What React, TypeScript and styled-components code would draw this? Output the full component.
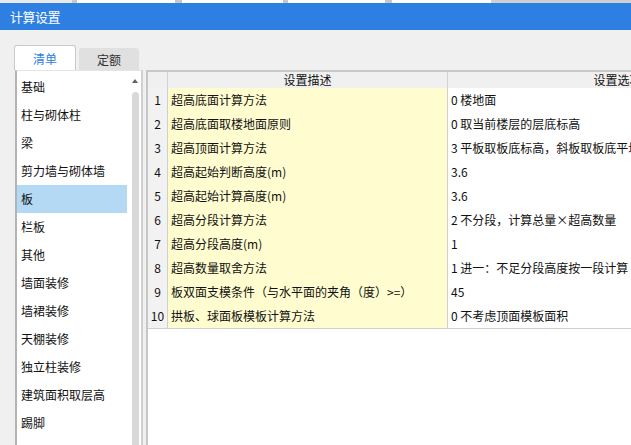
import React from "react";
import styled, { createGlobalStyle } from "styled-components";

const GlobalStyle = createGlobalStyle`
  html, body {
    margin: 0;
    padding: 0;
    width: 631px;
    height: 445px;
    overflow: hidden;
    background: #f0f0f0;
  }
  * {
    box-sizing: border-box;
  }
`;

const Window = styled.div`
  display: flex;
  flex-direction: column;
  width: 631px;
  height: 445px;
  font-family: "Noto Sans CJK SC", "Noto Sans", sans-serif;
  font-size: 12px;
  color: #111;
`;

const Backdrop = styled.div`
  display: flex;
  height: 3px;
  flex-shrink: 0;
`;

const BackdropPiece = styled.div<{ $w: number; $tone: string }>`
  width: ${(p) => p.$w}px;
  background: ${(p) => p.$tone};
  flex-shrink: 0;
`;

const TitleBar = styled.div`
  height: 27px;
  flex-shrink: 0;
  padding-left: 10px;
  background: #2d80e1;
  color: #fff;
  font-size: 13px;
  line-height: 27px;
  letter-spacing: -0.5px;
`;

const Body = styled.div`
  flex: 1;
  display: flex;
  flex-direction: column;
  min-height: 0;
  padding: 15px 0 0 14px;
  border-left: 3px solid #e2e5ea;
  margin-left: -3px;
`;

const TabRow = styled.div`
  display: flex;
  align-items: flex-end;
  gap: 3px;
  height: 25px;
  flex-shrink: 0;
`;

const Tab = styled.div<{ $active?: boolean }>`
  width: ${(p) => (p.$active ? 62 : 60)}px;
  height: ${(p) => (p.$active ? 25 : 22)}px;
  display: flex;
  align-items: center;
  justify-content: center;
  border: 1px solid ${(p) => (p.$active ? "#c9c9c9" : "#e0e0e0")};
  border-bottom: none;
  border-radius: 3px 3px 0 0;
  background: ${(p) => (p.$active ? "#fff" : "#e0e0e0")};
  color: ${(p) => (p.$active ? "#2d80e1" : "#333")};
  font-size: 12px;
  padding-top: ${(p) => (p.$active ? 1 : 0)}px;
`;

const Content = styled.div`
  flex: 1;
  display: flex;
  min-height: 0;
  gap: 3px;
  padding-left: 1px;
`;

const CategoryPanel = styled.div`
  width: 128px;
  flex-shrink: 0;
  display: flex;
  background: #fff;
  border-left: 2px solid #b4b4b4;
  border-right: 2px solid #d0d0d0;
  border-top: 1px solid #e4e4e4;
  overflow: hidden;
`;

const CategoryList = styled.div`
  width: 110px;
  flex-shrink: 0;
  display: flex;
  flex-direction: column;
  padding-top: 2px;
`;

const CategoryItem = styled.div<{ $selected?: boolean }>`
  height: 28px;
  flex-shrink: 0;
  line-height: 28px;
  padding-left: 4px;
  white-space: nowrap;
  background: ${(p) => (p.$selected ? "#b3d9f5" : "transparent")};
  color: #111;
`;

const ScrollBar = styled.div`
  width: 8px;
  margin-left: 4px;
  display: flex;
  flex-direction: column;
  align-items: center;
`;

const ScrollArrow = styled.div`
  margin-top: 8px;
  width: 0;
  height: 0;
  border-left: 3.5px solid transparent;
  border-right: 3.5px solid transparent;
  border-bottom: 4px solid #606060;
`;

const ScrollThumb = styled.div`
  margin-top: 9px;
  width: 7px;
  flex: 1;
  background: #d9d9d9;
  border-radius: 4px 4px 0 0;
`;

const GridPanel = styled.div`
  flex: 1;
  min-width: 0;
  background: #fff;
  border-left: 2px solid #c6c6c6;
  border-top: 2px solid #c8c8c8;
  overflow: hidden;
`;

const Grid = styled.div`
  display: grid;
  grid-template-columns: 20px 280px 340px;
  width: 643px;
`;

const HeadCell = styled.div`
  height: 16px;
  line-height: 15px;
  background: #f0f0f0;
  border-right: 1px solid #d2d2d2;
  border-bottom: 1px solid #c8c8c8;
  text-align: center;
  box-sizing: content-box;
  white-space: nowrap;
`;

const NumCell = styled.div`
  height: 23px;
  line-height: 22px;
  background: #f2f2f2;
  border-right: 1px solid #d0d0d0;
  border-bottom: 1px solid #d0d0d0;
  text-align: center;
  box-sizing: content-box;
  margin-top: -1px;
  padding-top: 1px;
`;

const DataCell = styled.div<{ $desc?: boolean }>`
  height: 23px;
  line-height: 22px;
  padding-left: 3px;
  background: ${(p) => (p.$desc ? "#fffdd0" : "#fff")};
  border-right: 1px solid #d0d0d0;
  border-bottom: 1px solid #d0d0d0;
  white-space: nowrap;
  overflow: hidden;
  box-sizing: content-box;
  margin-top: -1px;
  padding-top: 1px;
`;

const backdrop = [
  { w: 72, tone: "#e9e9e9" },
  { w: 5, tone: "#c8c8c8" },
  { w: 98, tone: "#ffffff" },
  { w: 7, tone: "#c8c8c8" },
  { w: 101, tone: "#ffffff" },
  { w: 5, tone: "#c8c8c8" },
  { w: 97, tone: "#ffffff" },
  { w: 7, tone: "#c8c8c8" },
  { w: 99, tone: "#ffffff" },
  { w: 140, tone: "#d0d0d0" },
];

const categories = [
  "基础",
  "柱与砌体柱",
  "梁",
  "剪力墙与砌体墙",
  "板",
  "栏板",
  "其他",
  "墙面装修",
  "墙裙装修",
  "天棚装修",
  "独立柱装修",
  "建筑面积取层高",
  "踢脚",
];

const settings = [
  ["超高底面计算方法", "0 楼地面"],
  ["超高底面取楼地面原则", "0 取当前楼层的层底标高"],
  ["超高顶面计算方法", "3 平板取板底标高，斜板取板底平均标高"],
  ["超高起始判断高度(m)", "3.6"],
  ["超高起始计算高度(m)", "3.6"],
  ["超高分段计算方法", "2 不分段，计算总量×超高数量"],
  ["超高分段高度(m)", "1"],
  ["超高数量取舍方法", "1 进一：不足分段高度按一段计算"],
  ["板双面支模条件（与水平面的夹角（度）>=）", "45"],
  ["拱板、球面板模板计算方法", "0 不考虑顶面模板面积"],
];

export default function App() {
  return (
    <>
      <GlobalStyle />
      <Window>
        <Backdrop>
          {backdrop.map((b, i) => (
            <BackdropPiece key={i} $w={b.w} $tone={b.tone} />
          ))}
        </Backdrop>
        <TitleBar>计算设置</TitleBar>
        <Body>
          <TabRow>
            <Tab $active>清单</Tab>
            <Tab>定额</Tab>
          </TabRow>
          <Content>
            <CategoryPanel>
              <CategoryList>
                {categories.map((c) => (
                  <CategoryItem key={c} $selected={c === "板"}>
                    {c}
                  </CategoryItem>
                ))}
              </CategoryList>
              <ScrollBar>
                <ScrollArrow />
                <ScrollThumb />
              </ScrollBar>
            </CategoryPanel>
            <GridPanel>
              <Grid>
                <HeadCell />
                <HeadCell>设置描述</HeadCell>
                <HeadCell>设置选项</HeadCell>
                {settings.map(([desc, value], i) => (
                  <React.Fragment key={i}>
                    <NumCell>{i + 1}</NumCell>
                    <DataCell $desc>{desc}</DataCell>
                    <DataCell>{value}</DataCell>
                  </React.Fragment>
                ))}
              </Grid>
            </GridPanel>
          </Content>
        </Body>
      </Window>
    </>
  );
}
